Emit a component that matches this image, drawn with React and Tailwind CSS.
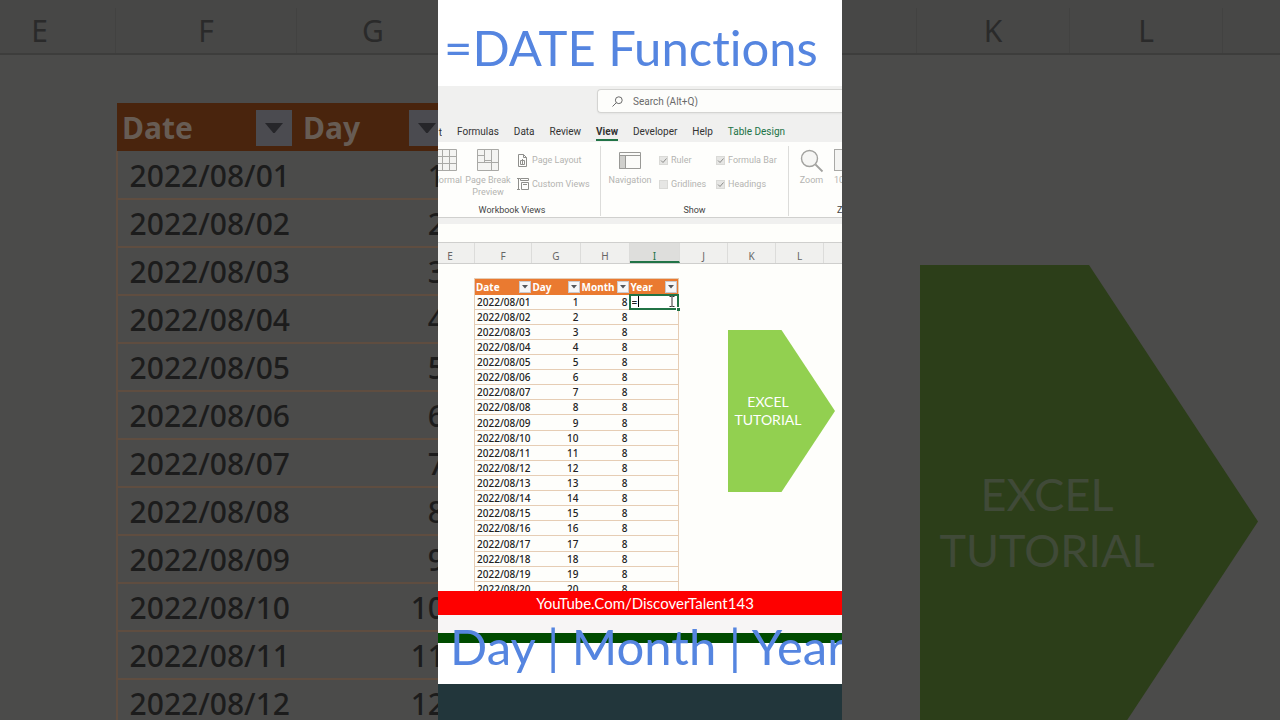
import React from 'react';
import clsx from 'clsx';

const days = Array.from({ length: 20 }, (_, i) => i + 1);
const toDate = (day) => `2022/08/${String(day).padStart(2, '0')}`;

const tabs = ['Formulas', 'Data', 'Review', 'View', 'Developer', 'Help', 'Table Design'];

const columns = [
    { name: 'E', className: 'w-[37px] pr-3' },
    { name: 'F', className: 'w-[57px]' },
    { name: 'G', className: 'w-[49px]' },
    { name: 'H', className: 'w-[49px]' },
    { name: 'I', className: 'w-[50px]', selected: true },
    { name: 'J', className: 'w-12' },
    { name: 'K', className: 'w-12' },
    { name: 'L', className: 'w-12' },
];

const headings = [
    { label: 'Date', width: 'w-[57px]' },
    { label: 'Day', width: 'w-[49px]' },
    { label: 'Month', width: 'w-[49px]' },
    { label: 'Year', width: 'w-[49px]' },
];

const GridIcon = () => (
    <svg width="22" height="22" viewBox="0 0 22 22" fill="#f4f4f2" stroke="#a9a9a6" aria-hidden="true">
        <path d="M.5 .5h21v21h-21zM7.5 .5v21M14.5 .5v21M.5 7.5h21M.5 14.5h21" />
    </svg>
);

const PageBreakIcon = () => (
    <svg width="22" height="22" viewBox="0 0 22 22" fill="#f4f4f2" stroke="#a9a9a6" aria-hidden="true">
        <path d="M.5 .5h21v21h-21z" />
        <path d="M7.5 .5v13M14.5 .5v21M.5 6.5h7M.5 13.5h21M7.5 11.5h7" fill="none" />
    </svg>
);

const PageLayoutIcon = () => (
    <svg width="11" height="13" viewBox="0 0 11 13" fill="none" stroke="#8f8f8c" aria-hidden="true">
        <path d="M1.5 .5h5l3 3v9h-8zM6.5 .5v3h3" />
        <path d="M3.5 6.5h4v4h-4zM5.5 5v5" />
    </svg>
);

const CustomViewsIcon = () => (
    <svg width="12" height="12" viewBox="0 0 12 12" fill="none" stroke="#8f8f8c" aria-hidden="true">
        <path d="M0 .5h3M1.5 .5v11M0 11.5h3M3.5 .5h8v2h-8zM4.5 4.5h7v7h-7zM6 6.5h4" />
    </svg>
);

const NavigationIcon = () => (
    <svg width="22" height="17" viewBox="0 0 22 17" fill="#fbfbf9" stroke="#999996" aria-hidden="true">
        <path d="M.5 .5h21v16h-21z" />
        <path d="M.5 3.5h6v13h-6z" fill="#cfcfcc" />
        <path d="M.5 3.5h21" />
    </svg>
);

const ZoomIcon = () => (
    <svg width="24" height="24" viewBox="0 0 24 24" fill="#f6f6f4" stroke="#a2a29f" aria-hidden="true">
        <circle cx="9.5" cy="9.5" r="8" strokeWidth="1.4" />
        <path d="M15.5 15.5l7 7" strokeWidth="1.8" />
    </svg>
);

const CheckOption = ({ label, checked }) => (
    <label className="flex items-center gap-[3px] whitespace-nowrap">
        <span className="relative flex size-[9px] shrink-0">
            <input
                type="checkbox"
                defaultChecked={checked}
                className="peer size-[9px] appearance-none border border-[#dadad7] bg-[#e6e6e4]"
            />
            <svg className="pointer-events-none absolute inset-0 hidden peer-checked:block" viewBox="0 0 9 9" fill="none" stroke="#8a8a88" aria-hidden="true">
                <path d="M2 4.5l2 2 3.5-4" />
            </svg>
        </span>
        {label}
    </label>
);

const FilterButton = ({ label, large }) => (
    <button
        type="button"
        aria-label={`Filter ${label}`}
        className={clsx(
            'flex shrink-0 items-center justify-center',
            large ? 'size-9 bg-[#4b4b50]' : 'size-3 border border-[#c9c9cf] bg-[#f6f6f8]'
        )}
    >
        <svg className={large ? 'w-[18px]' : 'w-[6px]'} viewBox="0 0 10 6" fill={large ? '#26262a' : '#55555a'} aria-hidden="true">
            <path d="M0 0h10L5 6z" />
        </svg>
    </button>
);

const Arrow = ({ className }) => (
    <div className={clsx('flex flex-col items-center justify-center [clip-path:polygon(0_0,50%_0,100%_50%,50%_100%,0_100%)] font-[Lato,sans-serif]', className)}>
        <span>EXCEL</span>
        <span>TUTORIAL</span>
    </div>
);

const LeftBackdrop = () => (
    <div aria-hidden="true" className="min-w-0 flex-1 overflow-hidden bg-[#4b4b4a] text-[30px] text-[#1c1c1c]">
        <div className="flex h-[55px] w-[449px] border-b-2 border-[#3d3d3c] bg-[#474746] pt-2 text-center text-[#2a2a2a]">
            <span className="w-[116px] border-r border-[#424241] pr-9 leading-[46px]">E</span>
            <span className="w-[181px] border-r border-[#424241] leading-[46px]">F</span>
            <span className="w-[152px] leading-[46px]">G</span>
        </div>
        <table className="mt-12 ml-[116px] w-[335px] table-fixed border-collapse">
            <thead>
                <tr className="h-12 bg-[#49240d] text-[#675c54]">
                    {['Date', 'Day'].map((label) => (
                        <th key={label} className={label === 'Date' ? 'w-[181px] p-0' : 'p-0'}>
                            <div className="flex items-center justify-between pt-0.5 pr-1.5 pl-[5px] leading-[46px]">
                                {label}
                                <FilterButton label={label} large />
                            </div>
                        </th>
                    ))}
                </tr>
            </thead>
            <tbody>
                {days.slice(0, 12).map((day) => (
                    <tr key={day} className="h-12 border-b-2 border-l-2 border-[#5f4d40] text-right leading-[42px] font-medium">
                        <td className="p-0 pt-0.5 pr-2">{toDate(day)}</td>
                        <td className="p-0 pt-0.5 pr-1.5">{day}</td>
                    </tr>
                ))}
            </tbody>
        </table>
    </div>
);

const RightBackdrop = () => (
    <div aria-hidden="true" className="min-w-0 flex-1 overflow-hidden bg-[#4b4b4a]">
        <div className="flex h-[55px] border-b-2 border-[#3d3d3c] bg-[#474746] pt-2 text-center text-[30px] leading-[46px] text-[#2a2a2a]">
            <span className="-ml-[78px] w-[153px] shrink-0 border-r border-[#424241]">J</span>
            <span className="w-[153px] shrink-0 border-r border-[#424241]">K</span>
            <span className="w-[153px] shrink-0 border-r border-[#424241]">L</span>
        </div>
        <Arrow className="mt-[210px] ml-[78px] h-[513px] w-[338px] bg-[#2c3e19] pr-[84px] text-[45px] leading-[56px] text-[#404a38]" />
    </div>
);

const Ribbon = () => (
    <div className="bg-[#f0f0ef] font-[Roboto,sans-serif] text-[10px]">
        <div className="flex pt-[3px] pl-[159px]">
            <label className="flex h-6 flex-1 items-center gap-2.5 rounded-l-sm border border-r-0 border-[#d4d4d2] bg-[#fdfdfb] pl-[14px] shadow-xs">
                <svg width="11" height="11" viewBox="0 0 11 11" fill="none" stroke="#6a6a6a" aria-hidden="true">
                    <circle cx="6.8" cy="4.2" r="3.4" />
                    <path d="M4.4 6.6L.5 10.5" />
                </svg>
                <input
                    type="text"
                    aria-label="Search"
                    placeholder="Search (Alt+Q)"
                    className="min-w-0 flex-1 bg-transparent outline-none placeholder:text-[#6a6a6a]"
                />
            </label>
        </div>
        <nav className="flex h-[29px] items-center gap-[15px] overflow-hidden pt-2.5 whitespace-nowrap text-[#333]">
            <a href="#layout" aria-label="Page Layout" className="flex w-1 justify-end overflow-hidden">t</a>
            {tabs.map((tab) => (
                <a
                    key={tab}
                    href={`#${tab.replace(' ', '-').toLowerCase()}`}
                    className={clsx(
                        'border-b-2 leading-[14px]',
                        tab === 'View' ? 'border-[#217346] font-bold' : 'border-transparent',
                        tab === 'Table Design' && 'text-[#217346]'
                    )}
                >
                    {tab}
                </a>
            ))}
        </nav>
        <div className="flex h-[76px] overflow-hidden border-b border-[#d0d0ce] bg-[#fefefc] pt-1 pb-px text-[9px] leading-3 text-[#b4b4b1]">
            {/* Workbook Views */}
            <section className="flex w-[163px] shrink-0 flex-col justify-between border-r border-[#dcdcda]">
                <div className="flex pt-[3px]">
                    <button type="button" className="flex w-6 flex-col items-end gap-[3px]">
                        <span className="pr-[5px]"><GridIcon /></span>
                        Normal
                    </button>
                    <button type="button" className="flex w-[52px] flex-col items-center gap-[3px]">
                        <PageBreakIcon />
                        <span>Page Break Preview</span>
                    </button>
                    <div className="flex flex-col gap-3 pt-[5px] pl-[3px] whitespace-nowrap">
                        <button type="button" className="flex h-3 items-center gap-1"><PageLayoutIcon />Page Layout</button>
                        <button type="button" className="flex h-3 items-center gap-[3px]"><CustomViewsIcon />Custom Views</button>
                    </div>
                </div>
                <h2 className="pr-[14px] text-center text-[#444]">Workbook Views</h2>
            </section>
            {/* Show */}
            <section className="flex w-[188px] shrink-0 flex-col justify-between border-r border-[#dcdcda]">
                <div className="flex pt-[3px]">
                    <button type="button" className="flex w-[58px] flex-col items-center gap-[3px]">
                        <span className="flex h-[22px] items-center"><NavigationIcon /></span>
                        Navigation
                    </button>
                    <div className="grid grid-cols-[57px_60px] content-start gap-y-3 pt-[5px]">
                        <CheckOption label="Ruler" checked />
                        <CheckOption label="Formula Bar" checked />
                        <CheckOption label="Gridlines" />
                        <CheckOption label="Headings" checked />
                    </div>
                </div>
                <h2 className="text-center text-[#444]">Show</h2>
            </section>
            {/* Zoom */}
            <section className="flex flex-1 flex-col justify-between overflow-hidden">
                <div className="flex pt-[3px]">
                    <button type="button" className="flex w-[45px] shrink-0 flex-col items-center gap-[3px]">
                        <span className="flex h-[22px]"><ZoomIcon /></span>
                        Zoom
                    </button>
                    <button type="button" className="flex shrink-0 flex-col items-start gap-[3px]">
                        <span className="h-[22px] w-6 border border-[#a9a9a6] bg-[#f4f4f2]" />
                        100%
                    </button>
                </div>
                <h2 className="pl-12 text-[#444]">Zoom</h2>
            </section>
        </div>
        <div className="h-1.5" />
    </div>
);

const Sheet = () => (
    <div className="flex min-h-0 flex-1 flex-col bg-[#fefefb] text-[10px]">
        <div className="mt-[18px] flex h-[22px] shrink-0 overflow-hidden border-y border-[#cfcfcd] bg-[#f0f0ee] text-center leading-[26px] text-[#666]">
            {columns.map((col) => (
                <span
                    key={col.name}
                    className={clsx(
                        'shrink-0 border-r border-[#dcdcda]',
                        col.className,
                        col.selected && 'border-b-2 border-b-[#217346] bg-[#dededc] text-[#217346]'
                    )}
                >
                    {col.name}
                </span>
            ))}
        </div>
        <div className="flex min-h-0 flex-1 items-start overflow-hidden pt-[14px] pl-9">
            <table className="h-[319px] w-[205px] shrink-0 table-fixed border-collapse border border-[#e6cdb4] text-[#222]">
                <thead>
                    <tr className="h-4 bg-[#ea7a30] text-white">
                        {headings.map(({ label, width }) => (
                            <th key={label} className={clsx('p-0', width)}>
                                <div className="flex items-center justify-between px-px leading-[14px]">
                                    {label}
                                    <FilterButton label={label} />
                                </div>
                            </th>
                        ))}
                    </tr>
                </thead>
                <tbody>
                    {days.map((day) => (
                        <tr key={day} className="border-b border-[#e6cdb4] text-right leading-[14px] font-medium">
                            <td className="p-0 pr-px">{toDate(day)}</td>
                            <td className="p-0 pr-0.5">{day}</td>
                            <td className="p-0 pr-0.5">8</td>
                            <td className="relative p-0">
                                {day === 1 && (
                                    <div className="absolute -inset-px flex items-center border-2 border-[#217346] bg-white">
                                        <input aria-label="I2" defaultValue="=" className="w-full pl-px leading-3 outline-none" />
                                        <span className="absolute left-[7px] h-[11px] w-px bg-black" />
                                        <svg className="absolute right-0.5" width="6" height="11" viewBox="0 0 6 11" fill="none" stroke="#333" aria-hidden="true">
                                            <path d="M.5 .5h2l.5 .5 .5-.5h2M3 1v9M.5 10.5h2l.5-.5 .5 .5h2" />
                                        </svg>
                                        <span className="absolute -right-[3px] -bottom-[3px] size-1 border-t border-l border-white bg-[#217346]" />
                                    </div>
                                )}
                            </td>
                        </tr>
                    ))}
                </tbody>
            </table>
            <Arrow className="mt-[52px] ml-[49px] h-[162px] w-[107px] shrink-0 bg-[#92d050] pr-[27px] text-[14px] leading-[18px] text-white" />
        </div>
    </div>
);

const App = () => {
    return (
        <div className="flex h-screen overflow-hidden font-['Noto_Sans',sans-serif]">
            <LeftBackdrop />
            <main className="flex aspect-[101/180] h-full shrink-0 flex-col overflow-hidden bg-white">
                <h1 className="h-[86px] shrink-0 overflow-hidden pl-1.5 font-[Lato,sans-serif] text-[49px] leading-[94px] whitespace-nowrap text-[#5585e0] [font-variant-ligatures:none]">
                    =DATE Functions
                </h1>
                <Ribbon />
                <Sheet />
                <a href="#channel" className="h-6 shrink-0 bg-[#fe0000] pl-2.5 text-center font-[Lato,sans-serif] text-[15px] leading-6 text-white">
                    YouTube.Com/DiscoverTalent143
                </a>
                <div className="relative h-[69px] shrink-0">
                    <div className="h-[18px] bg-[#f7f5f5]" />
                    <div className="h-2.5 bg-[#004b00]" />
                    <p className="absolute inset-0 overflow-hidden pl-3 font-[Lato,sans-serif] text-[49px] leading-[63px] whitespace-nowrap text-[#5585e0]">
                        Day | Month | Year
                    </p>
                </div>
                <div className="h-9 shrink-0 bg-[#22363b]" />
            </main>
            <RightBackdrop />
        </div>
    );
};

export default App;
